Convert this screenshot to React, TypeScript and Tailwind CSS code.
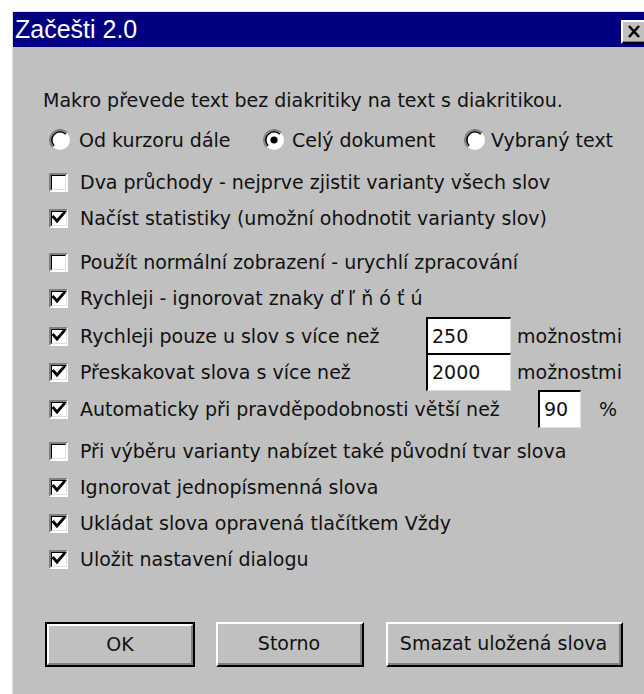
import React from "react";

const titleFont = { fontFamily: '"Liberation Sans", Arial, sans-serif' };
const bodyFont = { fontFamily: '"DejaVu Sans", Verdana, sans-serif' };

function CheckBox({ checked }: { checked: boolean }) {
  return (
    <span className="inline-flex w-[19px] h-[19px] shrink-0 border-2 border-t-[#808080] border-l-[#808080] border-b-white border-r-white">
      <span className="flex-1 flex items-center justify-center bg-white border border-t-[#000] border-l-[#000] border-b-[#dfdfdf] border-r-[#dfdfdf]">
        {checked && (
          <svg width="14" height="14" viewBox="0 0 14 14">
            <path d="M1.5 6 L5 10 L12 2" fill="none" stroke="#000" strokeWidth="2.8" strokeLinecap="square" />
          </svg>
        )}
      </span>
    </span>
  );
}

function Radio({ selected }: { selected: boolean }) {
  return (
    <svg width="22" height="22" viewBox="0 0 22 22" className="shrink-0">
      <circle cx="11" cy="11" r="10" fill="#fff" />
      <path d="M3.9 18.1 A10 10 0 0 1 18.1 3.9" fill="none" stroke="#808080" strokeWidth="2" />
      <path d="M5.2 16.8 A8.2 8.2 0 0 1 16.8 5.2" fill="none" stroke="#000" strokeWidth="1.6" />
      {selected && <circle cx="11" cy="11" r="3.6" fill="#000" />}
    </svg>
  );
}

function Row({
  checked,
  label,
  className = "",
}: {
  checked: boolean;
  label: string;
  className?: string;
}) {
  return (
    <div className={`flex items-center h-[36px] ${className}`}>
      <CheckBox checked={checked} />
      <span className="ml-[12px] whitespace-nowrap">{label}</span>
    </div>
  );
}

function NumberField({ value, width }: { value: string; width: string }) {
  return (
    <div
      className={`${width} h-[38px] shrink-0 flex items-center bg-white border-t-2 border-l-2 border-t-[#000] border-l-[#000] border-b border-r border-b-[#dfdfdf] border-r-[#dfdfdf] pl-[4px]`}
    >
      {value}
    </div>
  );
}

function Button({ label, width, primary = false }: { label: string; width: string; primary?: boolean }) {
  return (
    <div
      className={`${width} h-[45px] flex ${primary ? "border-2 border-black" : "border-t-2 border-l-2 border-t-white border-l-white border-b-2 border-r-2 border-b-black border-r-black"}`}
    >
      <div
        className={`flex-1 flex items-center justify-center ${primary ? "border-t-2 border-l-2 border-t-white border-l-white border-b-2 border-r-2 border-b-[#808080] border-r-[#808080]" : "border-b-2 border-r-2 border-b-[#808080] border-r-[#808080]"}`}
      >
        {label}
      </div>
    </div>
  );
}

export default function App() {
  return (
    <div className="w-[644px] h-[694px] bg-white overflow-hidden text-[#000]">
      <div className="ml-[12px] mt-[11px] h-[683px] flex flex-col border-l border-t border-[#dfdfdf]">
        {/* title bar */}
        <div className="h-[35px] bg-[#000080] flex items-center justify-between shrink-0" style={titleFont}>
          <span className="text-white text-[25px] leading-none ml-[2px]">Začešti 2.0</span>
          <div className="w-[26px] h-[24px] mt-[5px] mr-[-3px] bg-[#c0c0c0] flex border-t-2 border-l-2 border-t-white border-l-white border-b-2 border-r-2 border-b-black border-r-black">
            <div className="flex-1 flex items-center justify-center border-b border-r border-[#808080]">
              <svg width="14" height="13" viewBox="0 0 14 13">
                <path d="M2 1 L12 12 M12 1 L2 12" stroke="#000" strokeWidth="2.6" />
              </svg>
            </div>
          </div>
        </div>

        {/* dialog body */}
        <div className="flex-1 bg-[#c0c0c0] pl-[36px] pt-[35px] text-[19px] leading-none text-[#111]" style={bodyFont}>
          <div className="h-[36px] flex items-center ml-[-6px]">
            Makro převede text bez diakritiky na text s diakritikou.
          </div>

          <div className="h-[36px] flex items-center mt-[4px]">
            <div className="w-[214px] flex items-center">
              <Radio selected={false} />
              <span className="ml-[8px]">Od kurzoru dále</span>
            </div>
            <div className="w-[201px] flex items-center">
              <Radio selected={true} />
              <span className="ml-[7px]">Celý dokument</span>
            </div>
            <div className="flex items-center">
              <Radio selected={false} />
              <span className="ml-[5px]">Vybraný text</span>
            </div>
          </div>

          <Row className="mt-[6px]" checked={false} label="Dva průchody - nejprve zjistit varianty všech slov" />
          <Row checked={true} label="Načíst statistiky (umožní ohodnotit varianty slov)" />
          <Row className="mt-[8px]" checked={false} label="Použít normální zobrazení - urychlí zpracování" />
          <Row checked={true} label="Rychleji - ignorovat znaky ď ľ ň ó ť ú" />

          <div className="grid grid-cols-[377px_85px_1fr] items-center h-[36px] mt-[1px]">
            <div className="flex items-center">
              <CheckBox checked={true} />
              <span className="ml-[12px] whitespace-nowrap">Rychleji pouze u slov s více než</span>
            </div>
            <NumberField value="250" width="w-[85px]" />
            <span className="ml-[6px]">možnostmi</span>
          </div>

          <div className="grid grid-cols-[377px_85px_1fr] items-center h-[36px]">
            <div className="flex items-center">
              <CheckBox checked={true} />
              <span className="ml-[12px] whitespace-nowrap">Přeskakovat slova s více než</span>
            </div>
            <NumberField value="2000" width="w-[85px]" />
            <span className="ml-[6px]">možnostmi</span>
          </div>

          <div className="grid grid-cols-[489px_43px_1fr] items-center h-[36px] mt-[1px]">
            <div className="flex items-center">
              <CheckBox checked={true} />
              <span className="ml-[12px] whitespace-nowrap">Automaticky při pravděpodobnosti větší než</span>
            </div>
            <NumberField value="90" width="w-[43px]" />
            <span className="ml-[18px]">%</span>
          </div>

          <Row className="mt-[7px]" checked={false} label="Při výběru varianty nabízet také původní tvar slova" />
          <Row checked={true} label="Ignorovat jednopísmenná slova" />
          <Row checked={true} label="Ukládat slova opravená tlačítkem Vždy" />
          <Row checked={true} label="Uložit nastavení dialogu" />

          <div className="flex mt-[45px] ml-[-4px]">
            <Button label="OK" width="w-[150px]" primary />
            <div className="ml-[21px]">
              <Button label="Storno" width="w-[148px]" />
            </div>
            <div className="ml-[22px]">
              <Button label="Smazat uložená slova" width="w-[237px]" />
            </div>
          </div>
        </div>
      </div>
    </div>
  );
}
